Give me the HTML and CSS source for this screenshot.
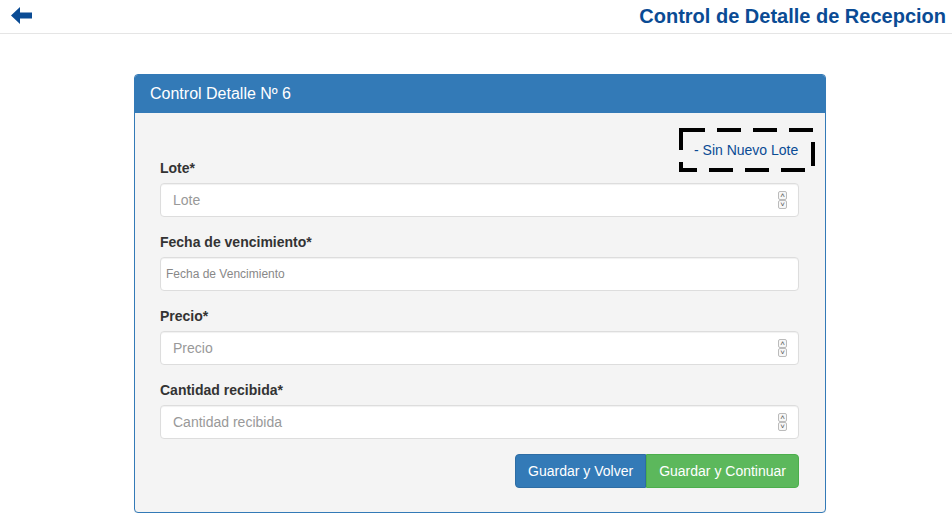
FILE: index.html
```html
<!DOCTYPE html>
<html lang="es">
<head>
<meta charset="utf-8">
<title>Control de Detalle de Recepcion</title>
<link rel="stylesheet" href="styles.css">
</head>
<body>
<header class="topbar">
  <a class="back" href="#" aria-label="Volver">
    <svg width="22" height="18" viewBox="0 0 22 18"><path d="M0 8.5 L9 0 L9 5.5 L21 5.5 L21 11.5 L9 11.5 L9 17 Z" fill="#0a4b94"/></svg>
  </a>
  <h1 class="title">Control de Detalle de Recepcion</h1>
</header>
<main class="panel">
  <div class="panel-heading">Control Detalle Nº 6</div>
  <div class="panel-body">
    <a class="sin-lote" href="#">
      <svg class="dash" width="136" height="44" viewBox="0 0 136 44"><rect x="2" y="2" width="132" height="40" fill="none" stroke="#000" stroke-width="4" stroke-dasharray="24 12"/></svg>
      - Sin Nuevo Lote
    </a>
    <form class="form">
      <div class="group">
        <label>Lote*</label>
        <div class="field"><input class="input" type="text" placeholder="Lote"><span class="spin"><i>&#708;</i><i>&#709;</i></span></div>
      </div>
      <div class="group">
        <label>Fecha de vencimiento*</label>
        <div class="field"><input class="input small" type="text" placeholder="Fecha de Vencimiento"></div>
      </div>
      <div class="group">
        <label>Precio*</label>
        <div class="field"><input class="input" type="text" placeholder="Precio"><span class="spin"><i>&#708;</i><i>&#709;</i></span></div>
      </div>
      <div class="group">
        <label>Cantidad recibida*</label>
        <div class="field"><input class="input" type="text" placeholder="Cantidad recibida"><span class="spin"><i>&#708;</i><i>&#709;</i></span></div>
      </div>
      <div class="actions">
        <button type="button" class="btn btn-primary">Guardar y Volver</button><button type="button" class="btn btn-success">Guardar y Continuar</button>
      </div>
    </form>
  </div>
</main>
</body>
</html>
```
FILE: styles.css
```css
* { box-sizing: border-box; }
html, body { margin: 0; padding: 0; background: #fff; }
body { font-family: "Liberation Sans", Arial, sans-serif; font-size: 14px; color: #333; line-height: 20px; }

.topbar {
  height: 34px;
  border-bottom: 1px solid #e5e5e5;
  display: flex;
  align-items: center;
  justify-content: space-between;
  padding: 0 6px 0 11px;
}
.back { display: flex; margin-top: -2px; }
.title {
  margin: 0;
  font-size: 20px;
  font-weight: bold;
  color: #0a4b94;
  line-height: 24px;
  margin-top: -2px;
}

.panel {
  width: 692px;
  margin: 40px 0 0 134px;
  border: 1px solid #337ab7;
  border-radius: 4px;
  background: #f4f4f4;
  box-shadow: 0 1px 1px rgba(0,0,0,.05);
}
.panel-heading {
  background: #337ab7;
  color: #fff;
  font-size: 16px;
  line-height: 18px;
  padding: 10px 15px;
  height: 38px;
  border-radius: 3px 3px 0 0;
}
.panel-body {
  padding: 15px 26px 15px 25px;
}
.sin-lote {
  float: right;
  position: relative;
  width: 136px;
  height: 44px;
  margin-right: -16px;
  padding-left: 15px;
  display: flex;
  align-items: center;
  color: #0a4b94;
  text-decoration: none;
  font-size: 14px;
}
.dash { position: absolute; left: 0; top: 0; }

.form { padding-top: 30px; }
.group { margin-bottom: 15px; }
.group label {
  display: block;
  font-weight: bold;
  margin-bottom: 5px;
}
.field { position: relative; }
.input {
  display: block;
  width: 100%;
  height: 34px;
  padding: 6px 12px;
  font-family: inherit;
  font-size: 14px;
  color: #555;
  background: #fff;
  border: 1px solid #ddd;
  border-radius: 4px;
  box-shadow: inset 0 1px 1px rgba(0,0,0,.06);
}
.input::placeholder { color: #999; }
.input.small { font-size: 12px; padding: 6px 5px; }
.input.small::placeholder { color: #888; }
.spin {
  position: absolute;
  right: 12px;
  top: 8px;
  display: flex;
  flex-direction: column;
}
.spin i {
  display: block;
  width: 9px;
  height: 9px;
  border: 1px solid #bbb;
  border-radius: 2px;
  font-style: normal;
  font-size: 8px;
  line-height: 8px;
  text-align: center;
  color: #555;
  background: #f7f7f7;
}

.actions {
  display: flex;
  justify-content: flex-end;
  margin-bottom: 9px;
}
.btn {
  font-family: inherit;
  font-size: 14px;
  line-height: 20px;
  padding: 6px 12px;
  height: 34px;
  color: #fff;
  border: 1px solid transparent;
  border-radius: 4px;
  cursor: pointer;
}
.btn-primary { background: #337ab7; border-color: #2e6da4; border-radius: 4px 0 0 4px; }
.btn-success { background: #5cb85c; border-color: #4cae4c; border-radius: 0 4px 4px 0; }
```
